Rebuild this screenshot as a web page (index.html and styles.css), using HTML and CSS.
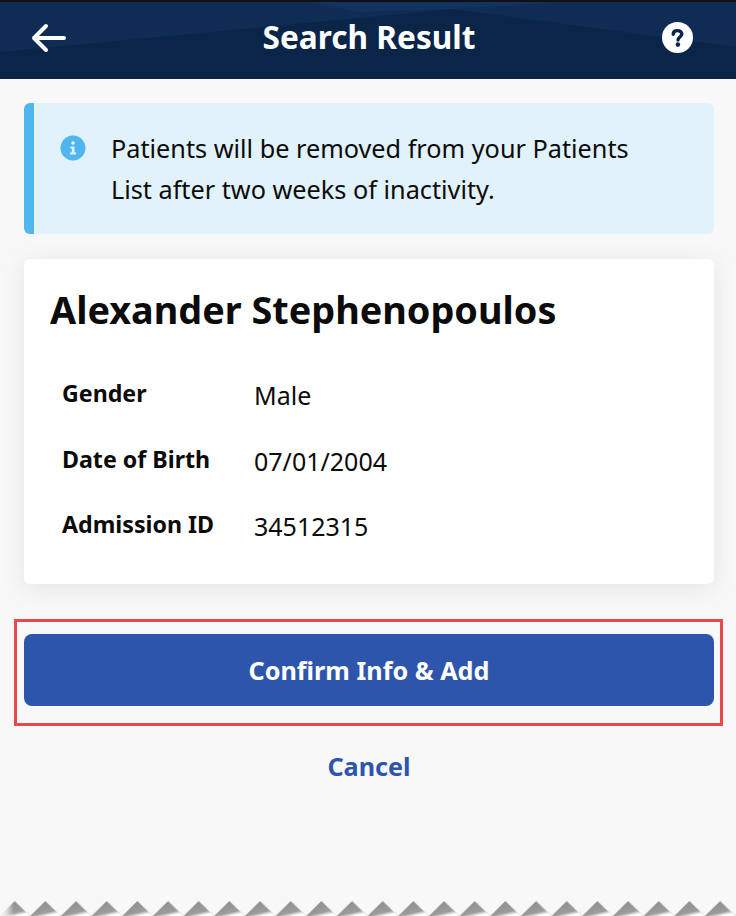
FILE: index.html
```html
<!DOCTYPE html>
<html lang="en">
<head>
<meta charset="utf-8">
<title>Search Result</title>
<link rel="stylesheet" href="styles.css">
</head>
<body>
<div class="page">
  <header class="topbar">
    <svg class="topbar-bg" viewBox="0 0 736 77" preserveAspectRatio="none" aria-hidden="true">
      <polygon points="0,0 736,0 736,45 453,7 0,50" fill="#0f2c55"/>
      <polygon points="310,0 357,10 453,7 560,0" fill="#123260"/>
    </svg>
    <button class="icon-btn" aria-label="Back">
      <svg width="36" height="30" viewBox="0 0 36 30"><path d="M15 3 L3 15 L15 27 M3 15 H33" fill="none" stroke="#fff" stroke-width="4" stroke-linecap="round" stroke-linejoin="round"/></svg>
    </button>
    <h1 class="title">Search Result</h1>
    <button class="icon-btn help" aria-label="Help">
      <svg width="31" height="31" viewBox="0 0 31 31"><circle cx="15.500" cy="15.500" r="15.500" fill="#fff"/><path d="M11.200 12.300 C11.200 9.800 13.200 8.600 15.500 8.600 C18 8.600 19.800 10 19.800 12.100 C19.800 15 16 15 16 18" fill="none" stroke="#0a2548" stroke-width="3.400" stroke-linecap="round"/><circle cx="15.900" cy="22.600" r="2.300" fill="#0a2548"/></svg>
    </button>
  </header>
  <main class="content">
    <section class="notice">
      <svg class="notice-icon" width="26" height="26" viewBox="0 0 26 26"><circle cx="13" cy="13" r="12.500" fill="#4fb6ef"/><circle cx="13" cy="8" r="1.800" fill="#e1f2fb"/><path d="M10.500 11.500 H14.500 V17.500 H16 V19.500 H10 V17.500 H11.800 V13.500 H10.500 Z" fill="#e1f2fb"/></svg>
      <p class="notice-text">Patients will be removed from your Patients List after two weeks of inactivity.</p>
    </section>
    <section class="card">
      <h2 class="name">Alexander Stephenopoulos</h2>
      <dl class="facts">
        <dt>Gender</dt><dd>Male</dd>
        <dt>Date of Birth</dt><dd>07/01/2004</dd>
        <dt>Admission ID</dt><dd>34512315</dd>
      </dl>
    </section>
    <div class="highlight">
      <button class="primary">Confirm Info &amp; Add</button>
    </div>
    <button class="link">Cancel</button>
  </main>
  <svg class="tear" width="736" height="16" aria-hidden="true">
    <defs>
      <linearGradient id="fade" x1="0.320" y1="0.150" x2="0.720" y2="1">
        <stop offset="0" stop-color="#8f8f8f"/><stop offset="0.680" stop-color="#9c9c9c"/><stop offset="0.920" stop-color="#ffffff"/><stop offset="1" stop-color="#ffffff"/>
      </linearGradient>
      <linearGradient id="edge" x1="0" y1="0" x2="1" y2="0">
        <stop offset="0" stop-color="#f8f8f8"/><stop offset="0.450" stop-color="#f8f8f8" stop-opacity="0.750"/><stop offset="1" stop-color="#f8f8f8" stop-opacity="0"/>
      </linearGradient>
      <pattern id="teeth" width="30.670" height="16" patternUnits="userSpaceOnUse" x="-0.500">
        <polygon points="0,16 15.300,1 30.670,16" fill="url(#fade)"/>
        <polyline points="15.300,1 30.670,16" fill="none" stroke="#dcdcdc" stroke-width="0.800"/>
      </pattern>
    </defs>
    <rect width="736" height="16" fill="url(#teeth)"/>
    <rect width="14" height="16" fill="url(#edge)"/>
  </svg>
</div>
</body>
</html>
```
FILE: styles.css
```css
* { box-sizing: border-box; }
html, body { margin: 0; padding: 0; }
body { font-family: "Noto Sans", "Open Sans", sans-serif; background: #f8f8f8; color: #0b0b0b; }
.page { width: 736px; height: 916px; position: relative; overflow: hidden; display: flex; flex-direction: column; }
.topbar { height: 79px; flex: none; border-top: 2px solid #111; background: #0a2548; display: flex; align-items: center; justify-content: space-between; padding: 0 43px 6px 31px; position: relative; }
.topbar-bg { position: absolute; inset: 0; width: 100%; height: 100%; }
.icon-btn { position: relative; padding: 0; border: 0; background: none; display: flex; width: 36px; justify-content: center; }
.help { width: 31px; }
.title { position: relative; margin: 0 0 2px 9px; font-size: 31.600px; font-weight: 700; color: #fff; line-height: 40px; }
.content { flex: 1; padding: 24px 22px 0 24px; display: flex; flex-direction: column; }
.notice { height: 131px; background: #e1f2fb; border-left: 10px solid #4fb6ef; border-radius: 6px; display: flex; padding: 25px 60px 0 26px; gap: 25px; }
.notice-icon { flex: none; margin-top: 7px; }
.notice-text { margin: 0; font-size: 25.250px; line-height: 41px; }
.card { margin-top: 25px; height: 325px; background: #fff; border-radius: 6px; box-shadow: 0 4px 24px rgba(60, 60, 100, 0.1); padding: 26px 26px 0; }
.name { margin: 0; font-size: 37.800px; font-weight: 700; line-height: 50px; }
.facts { display: grid; grid-template-columns: 192px 1fr; grid-auto-rows: 65.700px; margin: 38px 0 0 12px; }
.facts dt { font-size: 23.200px; font-weight: 700; line-height: 40px; }
.facts dd { margin: 0; font-size: 25px; line-height: 44px; }
.highlight { margin: 35px -9px 0 -10px; height: 107px; border: 3px solid #e8494a; padding: 12px 6px 12px 7px; }
.primary { display: block; width: 100%; height: 72px; border: 0; border-radius: 8px; background: #2e55ac; color: #fff; font: 700 25.200px "Noto Sans", sans-serif; }
.link { margin-top: 20px; align-self: center; border: 0; padding: 0; background: none; color: #2e55ac; font: 700 25.200px/40px "Noto Sans", sans-serif; }
.tear { position: absolute; left: 0; bottom: 0; display: block; }
```
